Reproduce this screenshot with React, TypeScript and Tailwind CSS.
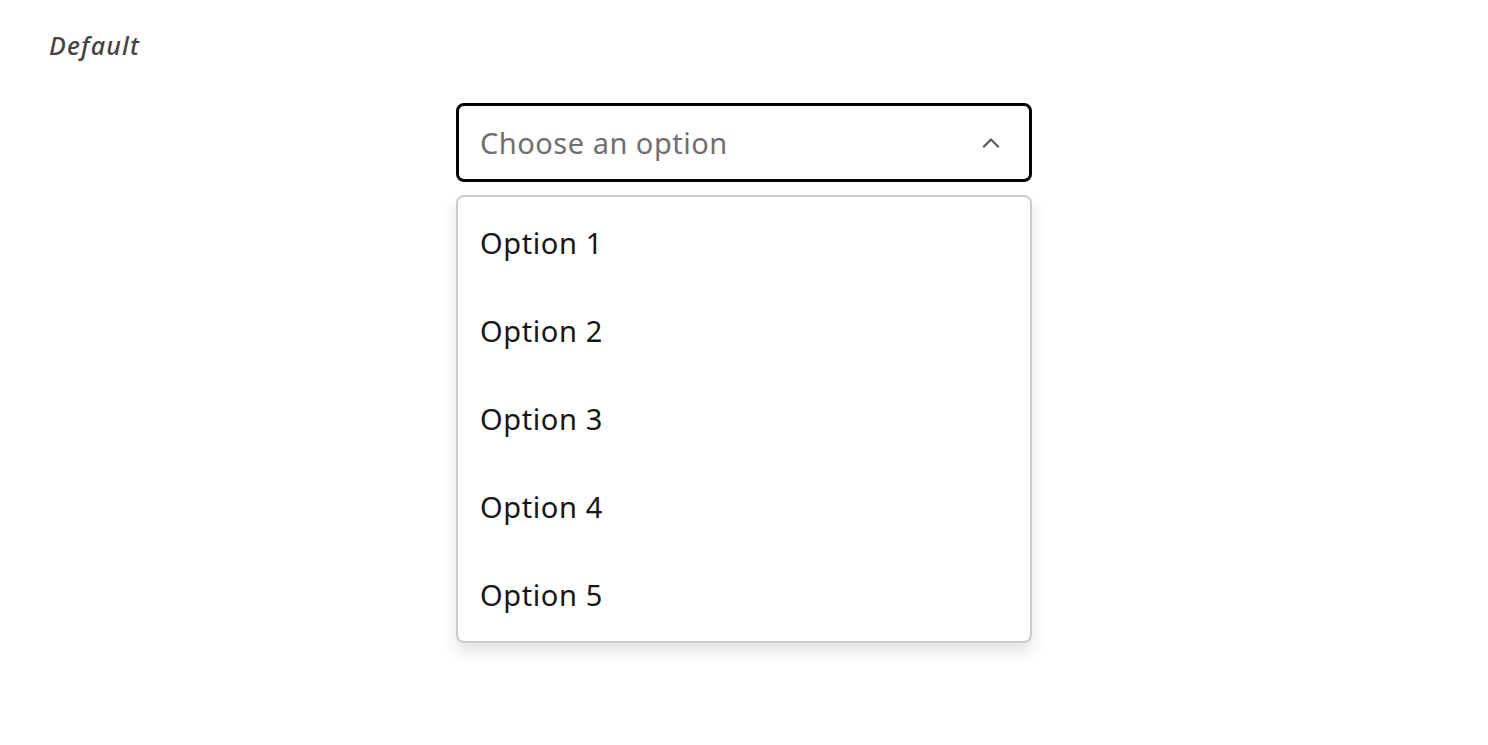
import React, { useState } from 'react';

const options = ['Option 1', 'Option 2', 'Option 3', 'Option 4', 'Option 5'];

const App: React.FC = () => {
  const [open, setOpen] = useState(true);
  const [selected, setSelected] = useState<string | null>(null);

  return (
    <div className="min-h-screen bg-white font-['Noto_Sans',sans-serif]">
      <div className="px-[49px] pt-[28px]">
        <p className="text-[25px] italic font-medium tracking-[1.2px] text-[#444444] leading-[34px]">Default</p>
      </div>

      <div className="flex justify-center pt-[41px]">
        <div className="w-[576px]">
          {/* Trigger */}
          <button
            onClick={() => setOpen(!open)}
            className="w-full h-[79px] flex items-center justify-between pl-[21px] pr-[26px] border-[3px] border-black rounded-[8px] bg-white text-left"
          >
            <span className={`text-[29px] tracking-[0.5px] ${selected ? 'text-[#161616]' : 'text-[#6f6f6f]'}`}>
              {selected ?? 'Choose an option'}
            </span>
            <svg
              className={`w-[24px] h-[24px] text-[#5a5a5a] ${open ? '' : 'rotate-180'}`}
              viewBox="0 0 24 24"
              fill="none"
              stroke="currentColor"
              strokeWidth="2.2"
              strokeLinecap="square"
            >
              <path d="M5 15.5l7-7 7 7" />
            </svg>
          </button>

          {/* Menu */}
          {open && (
            <div className="mt-[13px] py-[2px] border-2 border-[#cccccc] rounded-[8px] bg-white shadow-[0_8px_16px_rgba(0,0,0,0.12)]">
              {options.map(opt => (
                <div
                  key={opt}
                  onClick={() => {
                    setSelected(opt);
                    setOpen(false);
                  }}
                  className="h-[88px] flex items-center px-[22px] text-[29px] tracking-[0.6px] text-[#161616] cursor-pointer hover:bg-gray-50"
                >
                  {opt}
                </div>
              ))}
            </div>
          )}
        </div>
      </div>
    </div>
  );
};

export default App;
